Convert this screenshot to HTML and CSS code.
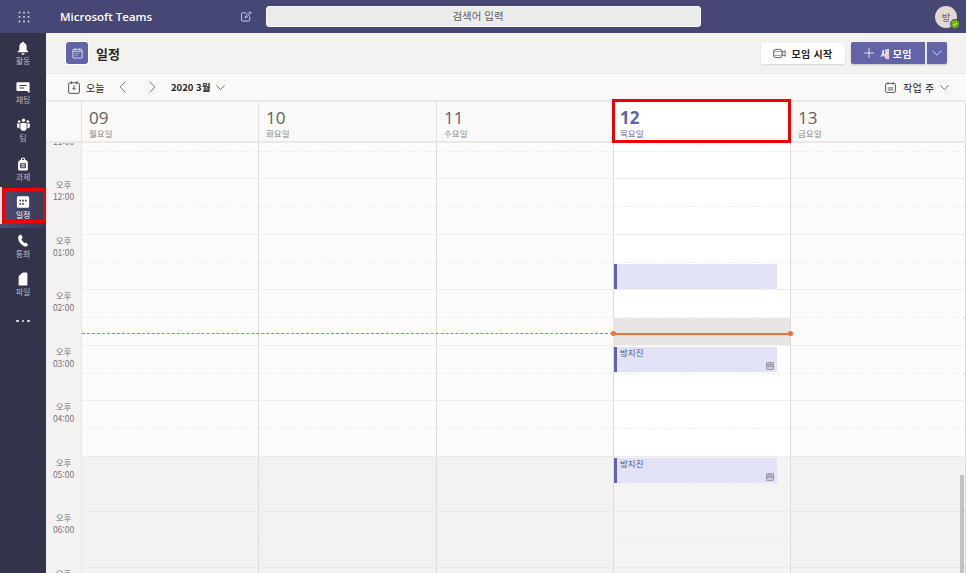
FILE: index.html
```html
<!DOCTYPE html>
<html lang="ko">
<head>
<meta charset="utf-8">
<title>일정 - Microsoft Teams</title>
<link rel="stylesheet" href="styles.css">
</head>
<body>
<header class="topbar">
  <div class="waffle">
    <svg viewBox="0 0 12 12" width="12" height="12"><g fill="#d8d8ea"><circle cx="1.5" cy="1.5" r=".9"/><circle cx="6" cy="1.5" r=".9"/><circle cx="10.5" cy="1.5" r=".9"/><circle cx="1.5" cy="6" r=".9"/><circle cx="6" cy="6" r=".9"/><circle cx="10.5" cy="6" r=".9"/><circle cx="1.5" cy="10.5" r=".9"/><circle cx="6" cy="10.5" r=".9"/><circle cx="10.5" cy="10.5" r=".9"/></g></svg>
  </div>
  <div class="brand">Microsoft Teams</div>
  <div class="compose">
    <svg viewBox="0 0 12 12" width="11" height="11" fill="none" stroke="#d6d6e8" stroke-width="1"><path d="M6 2H1.5a1 1 0 0 0-1 1v7a1 1 0 0 0 1 1h7a1 1 0 0 0 1-1V6"/><path d="M4.5 7.5l.5-2L10 .7l1.3 1.3-5 4.9z"/></svg>
  </div>
  <div class="search">검색어 입력</div>
  <div class="avatar">방<span class="presence"><svg viewBox="0 0 8 8" width="6" height="6" fill="none" stroke="#fff" stroke-width="1.200"><path d="M1.500 4.200 3.300 6 6.500 2.200"/></svg></span></div>
</header>
<div class="app">
  <nav class="rail">
    <a class="rail-item"><svg viewBox="0 0 16 16" width="14" height="14"><path fill="#fff" d="M8 .8a1.2 1.2 0 0 1 1.2 1.2 4.2 4.2 0 0 1 3 4v4.2l1.800 1.800v.8H2v-.8l1.800-1.800V6a4.200 4.200 0 0 1 3-4A1.200 1.200 0 0 1 8 .8zM6.200 14h3.600a1.800 1.800 0 0 1-3.600 0z"/></svg><span>활동</span></a>
    <a class="rail-item rail-chat"><svg viewBox="0 0 16 16" width="14" height="14"><path fill="#fff" fill-rule="evenodd" d="M1.500 1.500h13a1 1 0 0 1 1 1v11.500l-3-2.500h-11a1 1 0 0 1-1-1v-8a1 1 0 0 1 1-1zM4 4.500v1.200h8V4.500zM4 7.500v1.200h5.500V7.500z"/></svg><span>채팅</span></a>
    <a class="rail-item"><svg viewBox="0 0 16 16" width="15" height="14"><g fill="#fff"><circle cx="8" cy="2.600" r="1.900"/><circle cx="3" cy="4" r="1.500"/><circle cx="13" cy="4" r="1.500"/><path d="M5 5.600h6a.6.6 0 0 1 .6.6V11a3.600 3.600 0 0 1-7.200 0V6.200A.6.600 0 0 1 5 5.600z"/><path d="M.6 6.300h2.900v4.300a3 3 0 0 0 .2 1A2.500 2.500 0 0 1 .6 9.500zM15.400 6.300h-2.900v4.300a3 3 0 0 1-.2 1 2.500 2.500 0 0 0 3.100-2.100z"/></g></svg><span>팀</span></a>
    <a class="rail-item"><svg viewBox="0 0 16 16" width="14" height="14"><path fill="#fff" fill-rule="evenodd" d="M5.400 3.500V3A2.600 2.600 0 0 1 8 .5 2.600 2.600 0 0 1 10.600 3v.5c1.800.4 3 1.400 3 3.300v7.200a1.500 1.500 0 0 1-1.500 1.500H3.900a1.500 1.500 0 0 1-1.500-1.500V6.800c0-1.900 1.200-2.900 3-3.300zM6.800 3.300h2.400V3A1.200 1.200 0 0 0 6.800 3zM4.800 7.200v5.600h6.400V7.200zM6 8.400h4v1H6zM6 10.500h4v1.100H6z"/></svg><span>과제</span></a>
    <a class="rail-item rail-active"><svg viewBox="0 0 16 16" width="14" height="14"><path fill="#fff" fill-rule="evenodd" d="M2.500 1.500h11a1.500 1.500 0 0 1 1.500 1.500v10a1.500 1.500 0 0 1-1.500 1.500h-11A1.500 1.500 0 0 1 1 13V3a1.500 1.500 0 0 1 1.500-1.500zM3.800 5.500v2h2v-2zM7 5.500v2h2v-2zM10.200 5.500v2h2v-2zM3.800 9v2h2V9zM7 9v2h2V9z"/></svg><span>일정</span></a>
    <a class="rail-item"><svg viewBox="0 0 16 16" width="14" height="14"><path fill="#fff" d="M4.300 1.200l1.500-.5 1.900 3.500-1.200 1.300c-.3.400-.3.800 0 1.300l2.600 3.200c.3.400.7.500 1.100.3l1.400-.7 2.300 3-1.200 1.200c-1.100.9-2.500.7-3.800-.2C5.200 11.800 2.900 8.200 2.500 5c-.2-1.700.6-3.100 1.800-3.800z"/></svg><span>통화</span></a>
    <a class="rail-item"><svg viewBox="0 0 16 16" width="14" height="14"><path fill="#fff" d="M8 .5h4a1 1 0 0 1 1 1V14.500a1 1 0 0 1-1 1H4a1 1 0 0 1-1-1V5.500zM3.200 4.700 7.300.8v3.900z"/></svg><span>파일</span></a>
    <a class="rail-more"><i></i><i></i><i></i></a>
  </nav>
  <main class="content">
    <div class="page-head">
      <div class="page-tile">
        <svg viewBox="0 0 12 12" width="11" height="11" fill="none" stroke="#fff" stroke-width=".8"><rect x=".9" y="1.400" width="10.200" height="9.600" rx="1"/><path d="M3.500.4v2M8.500.4v2M1 3.600h10"/><path stroke-dasharray="1 1" d="M3 6h6M3 8.300h4"/></svg>
      </div>
      <h1 class="page-title">일정</h1>
      <button class="btn-start">
        <svg viewBox="0 0 14 12" width="13" height="11" fill="none" stroke="#424242" stroke-width=".9"><rect x=".6" y="1.500" width="9.300" height="9" rx="2.500"/><path d="M9.900 5l3.300-2v6L9.900 7"/><path d="M.6 4h9.300M.6 8h9.300" stroke-width=".6"/></svg>
        모임 시작
      </button>
      <div class="split">
        <button class="btn-new"><svg viewBox="0 0 10 10" width="10" height="10" stroke="#fff" stroke-width=".8"><path d="M5 0v10M0 5h10"/></svg>새 모임</button>
        <button class="btn-caret"><svg viewBox="0 0 10 6" width="10" height="6" fill="none" stroke="#e4e4f4" stroke-width=".9"><path d="M.5.700 5 5.200 9.500.700"/></svg></button>
      </div>
    </div>
    <div class="toolbar">
      <svg class="today-ico" viewBox="0 0 12 13" width="12" height="13" fill="none" stroke="#424242" stroke-width=".9"><rect x=".6" y="1.800" width="10.800" height="10.600" rx="1.500"/><path d="M3.300.3v2.800M8.700.3v2.800M6 4.500v4M4.500 7 6 8.500 7.500 7"/></svg>
      <span class="today">오늘</span>
      <svg class="nav-prev" viewBox="0 0 7 12" width="7" height="12" fill="none" stroke="#616161" stroke-width=".8"><path d="M6.500.5 1 6l5.500 5.500"/></svg>
      <svg class="nav-next" viewBox="0 0 7 12" width="7" height="12" fill="none" stroke="#616161" stroke-width=".8"><path d="M.5.500 6 6l-5.500 5.500"/></svg>
      <span class="month">2020 3월</span>
      <svg class="month-caret" viewBox="0 0 9 5" width="9" height="5" fill="none" stroke="#616161" stroke-width=".8"><path d="M.3.300 4.500 4.500 8.700.3"/></svg>
      <svg class="view-ico" viewBox="0 0 12 12" width="11" height="11" fill="none" stroke="#424242" stroke-width=".9"><rect x=".6" y="1.500" width="10.800" height="10" rx="1.500"/><path d="M3.300.2v2.500M8.700.2v2.500M3 6.500h6M3 8.700h6"/></svg>
      <span class="view">작업 주</span>
      <svg class="view-caret" viewBox="0 0 9 5" width="9" height="5" fill="none" stroke="#616161" stroke-width=".8"><path d="M.3.300 4.500 4.500 8.700.3"/></svg>
    </div>
    <div class="days">
      <div class="gutter"></div>
      <div class="day"><b>09</b><span>월요일</span></div>
      <div class="day"><b>10</b><span>화요일</span></div>
      <div class="day"><b>11</b><span>수요일</span></div>
      <div class="day day-today"><b>12</b><span>목요일</span></div>
      <div class="day"><b>13</b><span>금요일</span></div>
    </div>
    <div class="grid">
      <div class="grid-inner">
        <div class="row"><div class="time">오전<br>11:00</div><div class="cell"></div><div class="cell"></div><div class="cell"></div><div class="cell cell-today"></div><div class="cell"></div></div>
        <div class="row"><div class="time">오후<br>12:00</div><div class="cell"></div><div class="cell"></div><div class="cell"></div><div class="cell cell-today"></div><div class="cell"></div></div>
        <div class="row"><div class="time">오후<br>01:00</div><div class="cell"></div><div class="cell"></div><div class="cell"></div><div class="cell cell-today"><div class="event event-late"></div></div><div class="cell"></div></div>
        <div class="row"><div class="time">오후<br>02:00</div><div class="cell"></div><div class="cell"></div><div class="cell"></div><div class="cell cell-today"><div class="now-slot"></div></div><div class="cell"></div>
          <div class="now-past"></div><div class="now-line"></div>
        </div>
        <div class="row"><div class="time">오후<br>03:00</div><div class="cell"></div><div class="cell"></div><div class="cell"></div><div class="cell cell-today"><div class="event">방지진<svg class="event-ico" viewBox="0 0 8 8" width="8" height="8"><rect x=".4" y=".4" width="7.200" height="7.200" rx="1" fill="#c9c9d4" stroke="#77778a" stroke-width=".7"/><path d="M.5 4h7M1.500 2.200h5" stroke="#77778a" stroke-width=".7"/></svg></div></div><div class="cell"></div></div>
        <div class="row"><div class="time">오후<br>04:00</div><div class="cell"></div><div class="cell"></div><div class="cell"></div><div class="cell cell-today"></div><div class="cell"></div></div>
        <div class="row row-off"><div class="time">오후<br>05:00</div><div class="cell"></div><div class="cell"></div><div class="cell"></div><div class="cell cell-today"><div class="event">방지진<svg class="event-ico" viewBox="0 0 8 8" width="8" height="8"><rect x=".4" y=".4" width="7.200" height="7.200" rx="1" fill="#c9c9d4" stroke="#77778a" stroke-width=".7"/><path d="M.5 4h7M1.500 2.200h5" stroke="#77778a" stroke-width=".7"/></svg></div></div><div class="cell"></div></div>
        <div class="row row-off"><div class="time">오후<br>06:00</div><div class="cell"></div><div class="cell"></div><div class="cell"></div><div class="cell cell-today"></div><div class="cell"></div></div>
        <div class="row row-off"><div class="time">오후<br>07:00</div><div class="cell"></div><div class="cell"></div><div class="cell"></div><div class="cell cell-today"></div><div class="cell"></div></div>
      </div>
      <div class="scrollbar"></div>
    </div>
  </main>
</div>
</body>
</html>
```

FILE: styles.css
```css
* { box-sizing: border-box; }
html, body { margin: 0; height: 100%; }
body {
  width: 966px;
  height: 573px;
  overflow: hidden;
  font-family: "Noto Sans CJK KR", "Open Sans", sans-serif;
  color: #252423;
  background: #f3f2f1;
  display: flex;
  flex-direction: column;
}
svg { display: block; flex: none; }
button { font-family: inherit; border: 0; padding: 0; }

.topbar {
  height: 33px;
  flex: none;
  background: #464775;
  display: flex;
  align-items: center;
  position: relative;
}
.waffle { width: 60px; padding-left: 18px; }
.brand { width: 181px; font: 600 11.500px "Open Sans", sans-serif; color: #fff; }
.compose { width: 25px; }
.search {
  width: 435px;
  height: 21px;
  background: #ebebeb;
  border: 1px solid #f8f8f8;
  border-radius: 3px;
  text-align: center;
  font-size: 10.500px;
  line-height: 18px;
  color: #605e5c;
  padding-right: 11px;
}
.avatar {
  margin-left: 234px;
  width: 22px;
  height: 22px;
  border-radius: 50%;
  background: #e3d8d2;
  color: #6e5e55;
  font-size: 9.500px;
  line-height: 22px;
  text-align: center;
  position: relative;
}
.presence {
  position: absolute;
  right: -3px;
  bottom: -1px;
  width: 10px;
  height: 10px;
  border-radius: 50%;
  background: #6bb700;
  border: 1.500px solid #464775;
  display: flex;
  align-items: center;
  justify-content: center;
}

.app { flex: 1; min-height: 0; display: flex; }
.rail {
  width: 46px;
  flex: none;
  background: #33344a;
  padding-top: 2px;
  display: flex;
  flex-direction: column;
  align-items: stretch;
}
.rail-item {
  height: 38.500px;
  flex: none;
  display: flex;
  flex-direction: column;
  align-items: center;
  justify-content: center;
  gap: 0;
  color: #b8b8c6;
  font-size: 8px;
  line-height: 12px;
}
.rail-chat span { line-height: 9px; }
.rail-active {
  position: relative;
  color: #fff;
  background: linear-gradient(90deg, #4c4d72, #383a55);
}
.rail-active::before {
  content: "";
  position: absolute;
  left: 0;
  top: -2px;
  bottom: 3.500px;
  width: 2px;
  background: #e6e6f2;
}
.rail-active::after {
  content: "";
  position: absolute;
  left: 2px;
  right: 0;
  top: -1px;
  bottom: 4.500px;
  border: 3px solid #f00000;
}
.rail-more {
  display: flex;
  justify-content: center;
  gap: 3px;
  margin-top: 15px;
}
.rail-more i { width: 2.500px; height: 2.500px; border-radius: 50%; background: #e6e6ee; }

.content { flex: 1; min-width: 0; display: flex; flex-direction: column; }

.page-head {
  height: 41px;
  flex: none;
  display: flex;
  align-items: center;
  padding: 0 19px 0 20px;
  border-bottom: 1px solid #ebe9e7;
  background: #f3f2f1;
}
.page-tile {
  width: 22px;
  height: 22px;
  border-radius: 3px;
  background: #6264a7;
  box-shadow: 0 0 0 1px #fff;
  display: flex;
  align-items: center;
  justify-content: center;
}
.page-title { margin: 0 0 0 8px; font-size: 13px; font-weight: 700; color: #252423; flex: 1; }
.btn-start {
  width: 84px;
  height: 21px;
  background: #fff;
  border-radius: 2px;
  box-shadow: 0 1px 2px rgba(0,0,0,.12);
  font-size: 10px;
  font-weight: 700;
  color: #252423;
  display: flex;
  align-items: center;
  justify-content: center;
  gap: 5px;
  letter-spacing: .3px;
}
.split { display: flex; gap: 2px; margin-left: 6px; }
.btn-new {
  width: 74px;
  height: 22px;
  background: #6264a7;
  color: #fff;
  font-size: 10px;
  font-weight: 700;
  border-radius: 2px 0 0 2px;
  box-shadow: 0 1px 2px rgba(0,0,0,.2);
  display: flex;
  align-items: center;
  justify-content: center;
  gap: 6px;
  letter-spacing: .3px;
}
.btn-caret {
  width: 20px;
  height: 22px;
  background: #6264a7;
  border-radius: 0 2px 2px 0;
  box-shadow: 0 1px 2px rgba(0,0,0,.2);
  display: flex;
  align-items: center;
  justify-content: center;
}

.toolbar {
  height: 26px;
  flex: none;
  display: flex;
  align-items: center;
  background: #faf9f8;
  padding-left: 22px;
  font-size: 10px;
  color: #252423;
}
.today { margin-left: 6px; width: 33px; }
.nav-next { margin-left: 23px; }
.month { margin-left: 15px; font-size: 9.500px; font-weight: 700; width: 45px; }
.month-caret { margin-left: 0; }
.view-ico { margin-left: 660px; }
.view { margin-left: 7px; letter-spacing: .3px; }
.view-caret { margin-left: 5px; }

.days {
  height: 43px;
  flex: none;
  display: grid;
  grid-template-columns: 36px 177px 178px 177px 177px 175px;
  background: #faf9f8;
  border-top: 2px solid #ebe9e7;
  border-bottom: 2px solid #ebe9e7;
}
.gutter { border-right: 1px solid #e1dfdd; }
.day {
  border-right: 1px solid #e1dfdd;
  padding: 5px 0 0 7px;
  display: flex;
  flex-direction: column;
  color: #616161;
}
.day b { font-family: "Open Sans", sans-serif; font-weight: 400; font-size: 17px; line-height: 21px; }
.day span { font-size: 8.500px; line-height: 11px; color: #8a8886; }
.day-today { background: #fff; position: relative; color: #6264a7; padding-left: 6px; }
.day-today b { font-weight: 700; }
.day-today span { color: #6264a7; }
.day-today::after {
  content: "";
  position: absolute;
  left: -2px;
  right: -1px;
  top: -3px;
  bottom: -2px;
  border: 3px solid #f00000;
}

.grid { flex: 1; min-height: 0; overflow: hidden; position: relative; }
.grid-inner { margin-top: -20.500px; }
.row {
  height: 55.500px;
  display: grid;
  grid-template-columns: 36px 177px 178px 177px 177px 175px;
  position: relative;
}
.time {
  background: #f3f2f1;
  border-right: 1px solid #e8e6e4;
  text-align: center;
  font-size: 8.500px;
  line-height: 12px;
  color: #77757a;
}
.cell {
  position: relative;
  background: #fcfbfa;
  border-top: 1px solid #f1efed;
  border-right: 1px solid #dedcda;
}
.cell::before {
  content: "";
  position: absolute;
  left: 0;
  right: 0;
  top: 27px;
  border-top: 1px dashed #f0eeed;
}
.cell-today { background: #fff; }
.row-off .cell { background: #f3f2f1; border-top-color: #ecebe9; }
.row-off .cell-today { background: #f5f4f3; }

.event {
  position: absolute;
  left: 0;
  top: 1px;
  width: 163px;
  height: 25px;
  background: #e1e2f6;
  border-left: 3px solid #6264a7;
  padding-left: 3px;
  font-size: 8.500px;
  line-height: 11px;
  color: #55556a;
  z-index: 1;
}
.event-late { top: 29px; }
.event-ico { position: absolute; right: 3px; bottom: 2px; }
.now-slot {
  position: absolute;
  left: -1px;
  width: 177px;
  top: 28px;
  height: 27px;
  background: #e7e6e4;
}
.now-past {
  position: absolute;
  left: 36px;
  top: 44px;
  width: 531px;
  border-top: 1px dashed #c97a58;
}
.now-line {
  position: absolute;
  left: 567px;
  top: 43.500px;
  width: 177px;
  height: 2px;
  background: #e8713f;
}
.now-line::before, .now-line::after {
  content: "";
  position: absolute;
  top: -1.500px;
  width: 5px;
  height: 5px;
  border-radius: 50%;
  background: #e8713f;
}
.now-line::before { left: -2px; }
.now-line::after { right: -3px; }
.scrollbar {
  position: absolute;
  right: 2px;
  bottom: 0;
  width: 4px;
  height: 98px;
  background: #c4c3c1;
}
```
